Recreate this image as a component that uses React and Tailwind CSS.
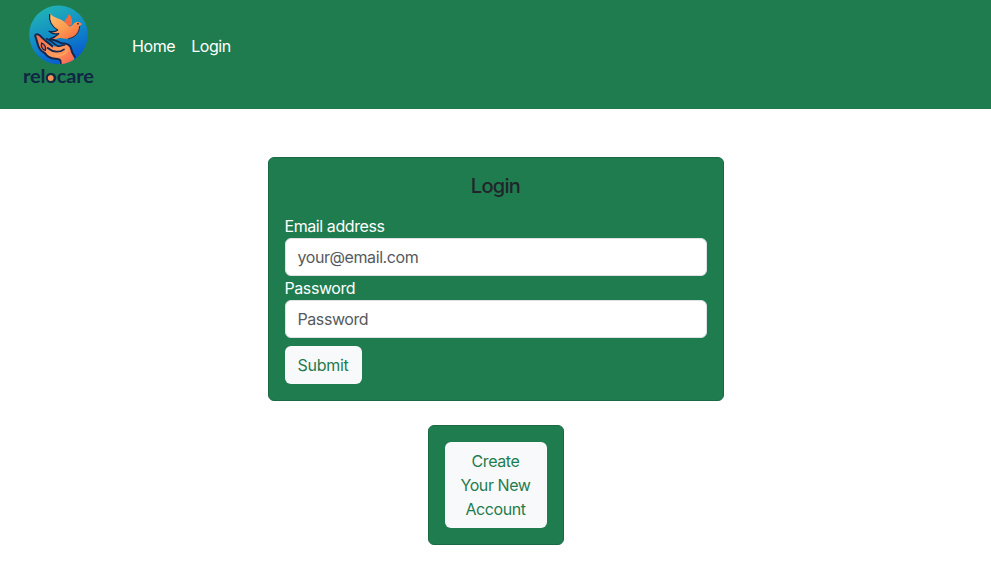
function Logo() {
  return (
    <svg className="block h-[90px] w-[84px] shrink-0" viewBox="0 0 252 270" role="img" aria-label="relocare">
      <defs>
        <linearGradient id="sky" x1="0.25" y1="0" x2="0.65" y2="1">
          <stop offset="0" stopColor="#22b5b5" />
          <stop offset="0.5" stopColor="#118bc6" />
          <stop offset="1" stopColor="#0757d0" />
        </linearGradient>
        <linearGradient id="wing" x1="0" y1="0" x2="0.9" y2="1">
          <stop offset="0" stopColor="#ffc46e" />
          <stop offset="0.55" stopColor="#ff9a50" />
          <stop offset="1" stopColor="#f9643f" />
        </linearGradient>
        <linearGradient id="hand" x1="0" y1="0" x2="1" y2="1">
          <stop offset="0" stopColor="#f56a48" />
          <stop offset="0.55" stopColor="#ff9a5c" />
          <stop offset="1" stopColor="#fa5949" />
        </linearGradient>
        <clipPath id="disc">
          <circle cx="127.5" cy="104.5" r="88" />
        </clipPath>
      </defs>
      <circle cx="127.5" cy="104.5" r="88" fill="url(#sky)" />
      <g strokeLinejoin="round" strokeLinecap="round">
        <path d="M145 62C152 56 156 49 159 41C167 50 171 63 167 75L154 79Z" fill="#f8693f" />
        <path d="M101 39C112 56 135 54 148 68C154 74 158 82 164 79C172 76 174 66 184 65C190 65 193 69 198 72L191 78C191 96 180 112 158 116C145 118 136 110 122 116C116 119 109 120 102 117C113 113 119 109 128 101C117 102 107 101 99 94C111 96 118 95 125 90C109 80 98 62 101 39Z" fill="url(#wing)" />
        <path d="M101 43C98 62 108 80 125 90C118 96 109 96 99 94C107 102 117 103 128 101C119 110 112 114 102 117" fill="none" stroke="#12284f" strokeWidth="4" />
        <path d="M191 80C189 98 179 112 158 116" fill="none" stroke="#12284f" strokeWidth="3" />
        <circle cx="186" cy="71" r="2.5" fill="#12284f" />
        <g clipPath="url(#disc)">
          <path d="M59 112C54 102 65 100 72 107C84 121 96 128 112 138C125 143 138 132 150 132C166 135 164 153 174 165V200H128C134 184 131 178 119 176C108 176 99 173 91 165C88 158 80 156 75 151C65 143 64 124 59 112Z" fill="url(#hand)" />
          <path d="M134 190C135 178 129 177 119 176C108 176 99 173 91 165C88 158 80 156 75 151C65 143 64 124 59 112C54 102 65 100 72 107C84 121 97 127 109 139M102 118C119 119 125 126 137 130C151 130 164 133 166 148C167 158 172 164 177 171" fill="none" stroke="#12284f" strokeWidth="6" />
          <path d="M77 129C85 132 91 141 88 151C79 149 74 140 77 129Z" fill="#fa6848" stroke="#12284f" strokeWidth="4" />
          <path d="M92 116C104 120 112 130 123 137C132 142 139 134 146 135" fill="none" stroke="#12284f" strokeWidth="5" />
          <path d="M95 144C112 158 131 158 144 148" fill="none" stroke="#12284f" strokeWidth="5" />
          <path d="M119 168C138 169 149 161 154 149" fill="none" stroke="#ffa15e" strokeWidth="6" />
        </g>
      </g>
      <text x="21" y="248" textLength="212" lengthAdjust="spacingAndGlyphs" className="font-['Lato',sans-serif] text-[56px] font-bold" fill="#102744">relocare</text>
      <circle cx="104" cy="234" r="8.5" fill="#ff9059" />
    </svg>
  );
}

function Field({ label, type, placeholder, id }) {
  return (
    <div className="flex flex-col">
      <label htmlFor={id} className="h-6 leading-6 text-white">{label}</label>
      <input id={id} type={type} placeholder={placeholder} className="h-[38px] w-full rounded-md border border-[#dee2e6] bg-white px-3 leading-6 outline-none placeholder:text-[#56595d]" />
    </div>
  );
}

export default function App() {
  return (
    <div className="min-h-[582px] bg-white font-['Inter',sans-serif] text-[16px] leading-6 tracking-[-0.42px]">
      <nav className="flex h-[109px] items-start bg-[#1f7c4f] pl-4 text-white">
        <Logo />
        <div className="mt-[34px] ml-8 flex gap-4">
          <a href="#home">Home</a>
          <a href="#login">Login</a>
        </div>
      </nav>
      <main className="flex flex-col items-center gap-6 pt-12">
        <form className="h-[244px] w-[456px] rounded-md border border-[#1b6943] bg-[#1f7c4f] p-4">
          <h1 className="mb-4 text-center text-[20px] leading-6 font-medium tracking-[-0.7px] text-[#212529]">Login</h1>
          <Field id="email" label="Email address" type="email" placeholder="your@email.com" />
          <Field id="password" label="Password" type="password" placeholder="Password" />
          <button type="button" className="mt-2 h-[38px] w-[77px] rounded-md bg-[#f8f9fa] tracking-[-0.3px] text-[#1f7c4f]">Submit</button>
        </form>
        <section className="h-[120px] w-[136px] rounded-md border border-[#1b6943] bg-[#1f7c4f] p-4">
          <button type="button" className="h-[86px] w-full rounded-md bg-[#f8f9fa] px-3 text-[#1f7c4f]">Create Your New Account</button>
        </section>
      </main>
    </div>
  );
}
